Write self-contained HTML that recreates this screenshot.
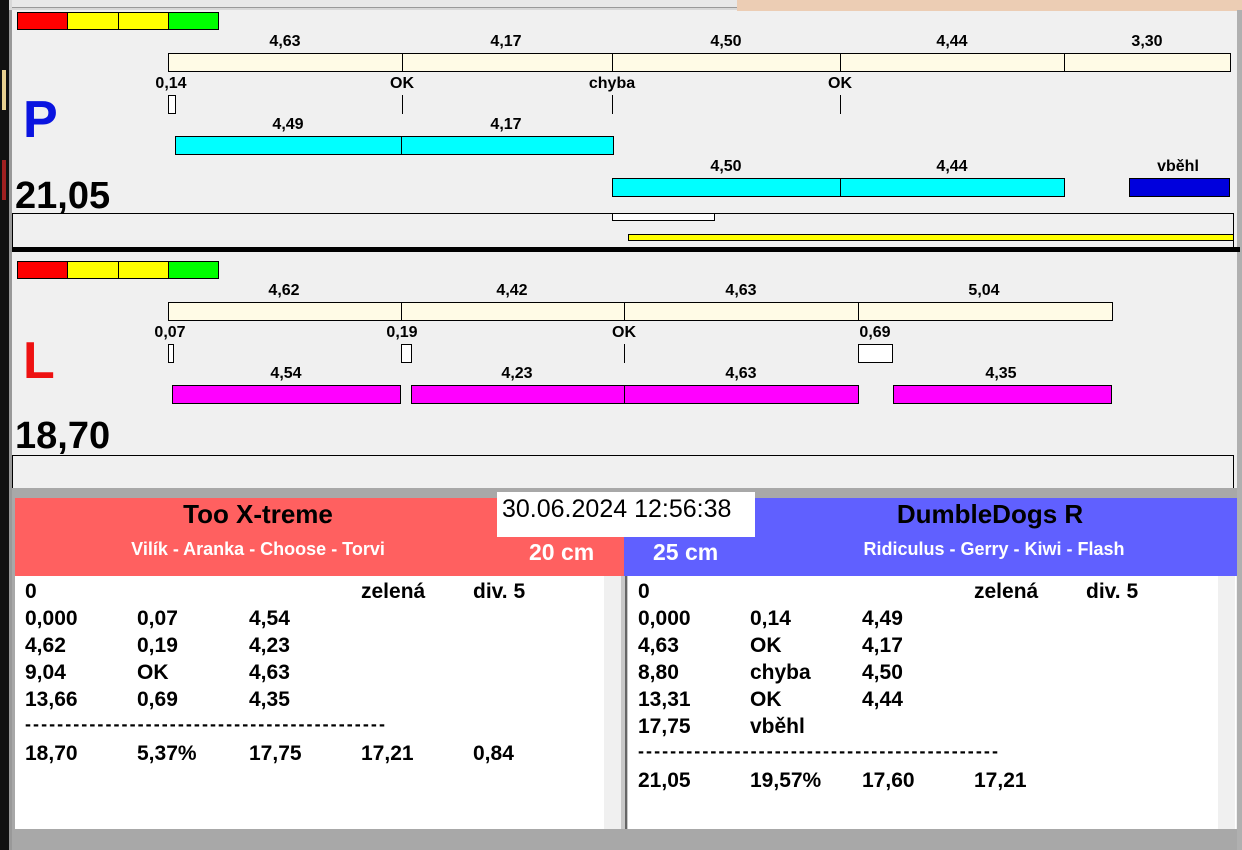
<!DOCTYPE html>
<html><head><meta charset="utf-8"><style>
*{margin:0;padding:0;box-sizing:border-box}
body{width:1242px;height:850px;overflow:hidden;background:#f0f0f0;position:relative;font-family:"Liberation Sans",Arial,sans-serif;font-weight:bold}
.a{position:absolute}
.b{position:absolute;border:1px solid #000}
.t{position:absolute;font-size:16px;transform:translateX(-50%);white-space:nowrap;line-height:18px}
.r{position:absolute;font-size:21px;line-height:27px;white-space:nowrap}
.d{position:absolute;font-size:18px;line-height:27px;white-space:nowrap;letter-spacing:2.05px}
</style></head><body>
<div class="a" style="left:0;top:0;width:1242px;height:10px;background:#d8d8d8"></div>
<div class="a" style="left:737px;top:0;width:505px;height:11px;background:#eccdb4"></div>
<div class="a" style="left:12px;top:0;width:725px;height:8px;background:#e8e8e8;border-bottom:1px solid #999"></div>
<div class="a" style="left:0;top:0;width:9px;height:850px;background:#111"></div>
<div class="a" style="left:2px;top:70px;width:4px;height:40px;background:#e8d090"></div>
<div class="a" style="left:2px;top:160px;width:4px;height:40px;background:#a02020"></div>
<div class="a" style="left:9px;top:10px;width:3px;height:840px;background:#999"></div>
<div class="a" style="left:1237px;top:10px;width:5px;height:840px;background:#b0b0b0"></div>

<!-- P panel -->
<div class="b" style="left:17px;top:12px;width:202px;height:18px;background:#ff0000"></div>
<div class="b" style="left:67px;top:12px;width:52px;height:18px;background:#ffff00"></div>
<div class="b" style="left:118px;top:12px;width:51px;height:18px;background:#ffff00"></div>
<div class="b" style="left:168px;top:12px;width:51px;height:18px;background:#00ff00"></div>

<div class="b" style="left:168px;top:53px;width:1063px;height:19px;background:#fffbe6"></div>
<div class="a" style="left:402px;top:53px;width:1px;height:19px;background:#000"></div>
<div class="a" style="left:612px;top:53px;width:1px;height:19px;background:#000"></div>
<div class="a" style="left:840px;top:53px;width:1px;height:19px;background:#000"></div>
<div class="a" style="left:1064px;top:53px;width:1px;height:19px;background:#000"></div>
<div class="t" style="left:285px;top:33px">4,63</div>
<div class="t" style="left:506px;top:33px">4,17</div>
<div class="t" style="left:726px;top:33px">4,50</div>
<div class="t" style="left:952px;top:33px">4,44</div>
<div class="t" style="left:1147px;top:33px">3,30</div>
<div class="t" style="left:171px;top:75px">0,14</div>
<div class="t" style="left:402px;top:75px">OK</div>
<div class="t" style="left:612px;top:75px">chyba</div>
<div class="t" style="left:840px;top:75px">OK</div>
<div class="b" style="left:168px;top:95px;width:8px;height:19px;background:#fff"></div>
<div class="a" style="left:402px;top:95px;width:1px;height:19px;background:#000"></div>
<div class="a" style="left:612px;top:95px;width:1px;height:19px;background:#000"></div>
<div class="a" style="left:840px;top:95px;width:1px;height:19px;background:#000"></div>

<div class="t" style="left:288px;top:116px">4,49</div>
<div class="t" style="left:506px;top:116px">4,17</div>
<div class="b" style="left:175px;top:136px;width:439px;height:19px;background:#00ffff"></div>
<div class="a" style="left:401px;top:136px;width:1px;height:19px;background:#000"></div>

<div class="t" style="left:726px;top:158px">4,50</div>
<div class="t" style="left:952px;top:158px">4,44</div>
<div class="t" style="left:1178px;top:158px">vběhl</div>
<div class="b" style="left:612px;top:178px;width:453px;height:19px;background:#00ffff"></div>
<div class="a" style="left:840px;top:178px;width:1px;height:19px;background:#000"></div>
<div class="b" style="left:1129px;top:178px;width:101px;height:19px;background:#0000dd"></div>

<div class="a" style="left:23px;top:90px;font-size:52px;color:#0a14e0;line-height:60px">P</div>
<div class="a" style="left:15px;top:175px;font-size:38px;line-height:42px">21,05</div>
<div class="a" style="left:12px;top:213px;width:1222px;height:1px;background:#000"></div>
<div class="a" style="left:12px;top:213px;width:1px;height:34px;background:#000"></div>
<div class="a" style="left:1233px;top:213px;width:1px;height:34px;background:#000"></div>
<div class="b" style="left:612px;top:213px;width:103px;height:8px;background:#fff"></div>
<div class="b" style="left:628px;top:234px;width:606px;height:7px;background:#ffff00"></div>
<div class="a" style="left:12px;top:247px;width:1228px;height:5px;background:#000"></div>

<!-- L panel -->
<div class="b" style="left:17px;top:261px;width:202px;height:18px;background:#ff0000"></div>
<div class="b" style="left:67px;top:261px;width:52px;height:18px;background:#ffff00"></div>
<div class="b" style="left:118px;top:261px;width:51px;height:18px;background:#ffff00"></div>
<div class="b" style="left:168px;top:261px;width:51px;height:18px;background:#00ff00"></div>

<div class="t" style="left:284px;top:282px">4,62</div>
<div class="t" style="left:512px;top:282px">4,42</div>
<div class="t" style="left:741px;top:282px">4,63</div>
<div class="t" style="left:984px;top:282px">5,04</div>
<div class="b" style="left:168px;top:302px;width:945px;height:19px;background:#fffbe6"></div>
<div class="a" style="left:401px;top:302px;width:1px;height:19px;background:#000"></div>
<div class="a" style="left:624px;top:302px;width:1px;height:19px;background:#000"></div>
<div class="a" style="left:858px;top:302px;width:1px;height:19px;background:#000"></div>
<div class="t" style="left:170px;top:324px">0,07</div>
<div class="t" style="left:402px;top:324px">0,19</div>
<div class="t" style="left:624px;top:324px">OK</div>
<div class="t" style="left:875px;top:324px">0,69</div>
<div class="b" style="left:168px;top:344px;width:6px;height:19px;background:#fff"></div>
<div class="b" style="left:401px;top:344px;width:11px;height:19px;background:#fff"></div>
<div class="a" style="left:624px;top:344px;width:1px;height:19px;background:#000"></div>
<div class="b" style="left:858px;top:344px;width:35px;height:19px;background:#fff"></div>

<div class="t" style="left:286px;top:365px">4,54</div>
<div class="t" style="left:517px;top:365px">4,23</div>
<div class="t" style="left:741px;top:365px">4,63</div>
<div class="t" style="left:1001px;top:365px">4,35</div>
<div class="b" style="left:172px;top:385px;width:229px;height:19px;background:#ff00ff"></div>
<div class="b" style="left:411px;top:385px;width:448px;height:19px;background:#ff00ff"></div>
<div class="a" style="left:624px;top:385px;width:1px;height:19px;background:#000"></div>
<div class="b" style="left:893px;top:385px;width:219px;height:19px;background:#ff00ff"></div>

<div class="a" style="left:23px;top:331px;font-size:52px;color:#ee1111;line-height:60px">L</div>
<div class="a" style="left:15px;top:415px;font-size:38px;line-height:42px">18,70</div>
<div class="a" style="left:12px;top:455px;width:1222px;height:1px;background:#000"></div>
<div class="a" style="left:12px;top:455px;width:1px;height:34px;background:#000"></div>
<div class="a" style="left:1233px;top:455px;width:1px;height:34px;background:#000"></div>

<!-- bottom -->
<div class="a" style="left:12px;top:488px;width:1225px;height:10px;background:#a8a8a8"></div>
<div class="a" style="left:15px;top:498px;width:609px;height:78px;background:#ff6060"></div>
<div class="a" style="left:624px;top:498px;width:613px;height:78px;background:#6060ff"></div>
<div class="a" style="left:12px;top:498px;width:3px;height:352px;background:#a8a8a8"></div>
<div class="a" style="left:497px;top:492px;width:258px;height:45px;background:#fff"></div>
<div class="a" style="left:502px;top:494px;font-size:25px;font-weight:normal;line-height:30px">30.06.2024 12:56:38</div>
<div class="t" style="left:258px;top:499px;font-size:26px;line-height:30px">Too X-treme</div>
<div class="t" style="left:258px;top:538px;font-size:18px;line-height:22px;color:#fff">Vilík - Aranka - Choose - Torvi</div>
<div class="a" style="left:529px;top:538px;font-size:23px;line-height:28px;color:#fff">20 cm</div>
<div class="t" style="left:990px;top:499px;font-size:26px;line-height:30px">DumbleDogs R</div>
<div class="t" style="left:994px;top:538px;font-size:18px;line-height:22px;color:#fff">Ridiculus - Gerry - Kiwi - Flash</div>
<div class="a" style="left:653px;top:538px;font-size:23px;line-height:28px;color:#fff">25 cm</div>

<div class="a" style="left:15px;top:576px;width:606px;height:253px;background:#fff"></div>
<div class="a" style="left:604px;top:576px;width:17px;height:253px;background:#f0f0f0"></div>
<div class="a" style="left:628px;top:576px;width:608px;height:253px;background:#fff"></div>
<div class="a" style="left:1218px;top:576px;width:17px;height:253px;background:#f0f0f0"></div>
<div class="a" style="left:621px;top:576px;width:7px;height:253px;background:#c8c8c8"></div>
<div class="a" style="left:625px;top:576px;width:2px;height:253px;background:#666"></div>
<div class="a" style="left:12px;top:829px;width:1225px;height:21px;background:#a8a8a8"></div>

<div class="r" style="left:25px;top:578px">0</div><div class="r" style="left:361px;top:578px">zelená</div><div class="r" style="left:473px;top:578px">div. 5</div>
<div class="r" style="left:25px;top:605px">0,000</div><div class="r" style="left:137px;top:605px">0,07</div><div class="r" style="left:249px;top:605px">4,54</div>
<div class="r" style="left:25px;top:632px">4,62</div><div class="r" style="left:137px;top:632px">0,19</div><div class="r" style="left:249px;top:632px">4,23</div>
<div class="r" style="left:25px;top:659px">9,04</div><div class="r" style="left:137px;top:659px">OK</div><div class="r" style="left:249px;top:659px">4,63</div>
<div class="r" style="left:25px;top:686px">13,66</div><div class="r" style="left:137px;top:686px">0,69</div><div class="r" style="left:249px;top:686px">4,35</div>
<div class="d" style="left:25px;top:711px">---------------------------------------------</div>
<div class="r" style="left:25px;top:740px">18,70</div><div class="r" style="left:137px;top:740px">5,37%</div><div class="r" style="left:249px;top:740px">17,75</div><div class="r" style="left:361px;top:740px">17,21</div><div class="r" style="left:473px;top:740px">0,84</div>

<div class="r" style="left:638px;top:578px">0</div><div class="r" style="left:974px;top:578px">zelená</div><div class="r" style="left:1086px;top:578px">div. 5</div>
<div class="r" style="left:638px;top:605px">0,000</div><div class="r" style="left:750px;top:605px">0,14</div><div class="r" style="left:862px;top:605px">4,49</div>
<div class="r" style="left:638px;top:632px">4,63</div><div class="r" style="left:750px;top:632px">OK</div><div class="r" style="left:862px;top:632px">4,17</div>
<div class="r" style="left:638px;top:659px">8,80</div><div class="r" style="left:750px;top:659px">chyba</div><div class="r" style="left:862px;top:659px">4,50</div>
<div class="r" style="left:638px;top:686px">13,31</div><div class="r" style="left:750px;top:686px">OK</div><div class="r" style="left:862px;top:686px">4,44</div>
<div class="r" style="left:638px;top:713px">17,75</div><div class="r" style="left:750px;top:713px">vběhl</div>
<div class="d" style="left:638px;top:738px">---------------------------------------------</div>
<div class="r" style="left:638px;top:767px">21,05</div><div class="r" style="left:750px;top:767px">19,57%</div><div class="r" style="left:862px;top:767px">17,60</div><div class="r" style="left:974px;top:767px">17,21</div>
</body></html>
